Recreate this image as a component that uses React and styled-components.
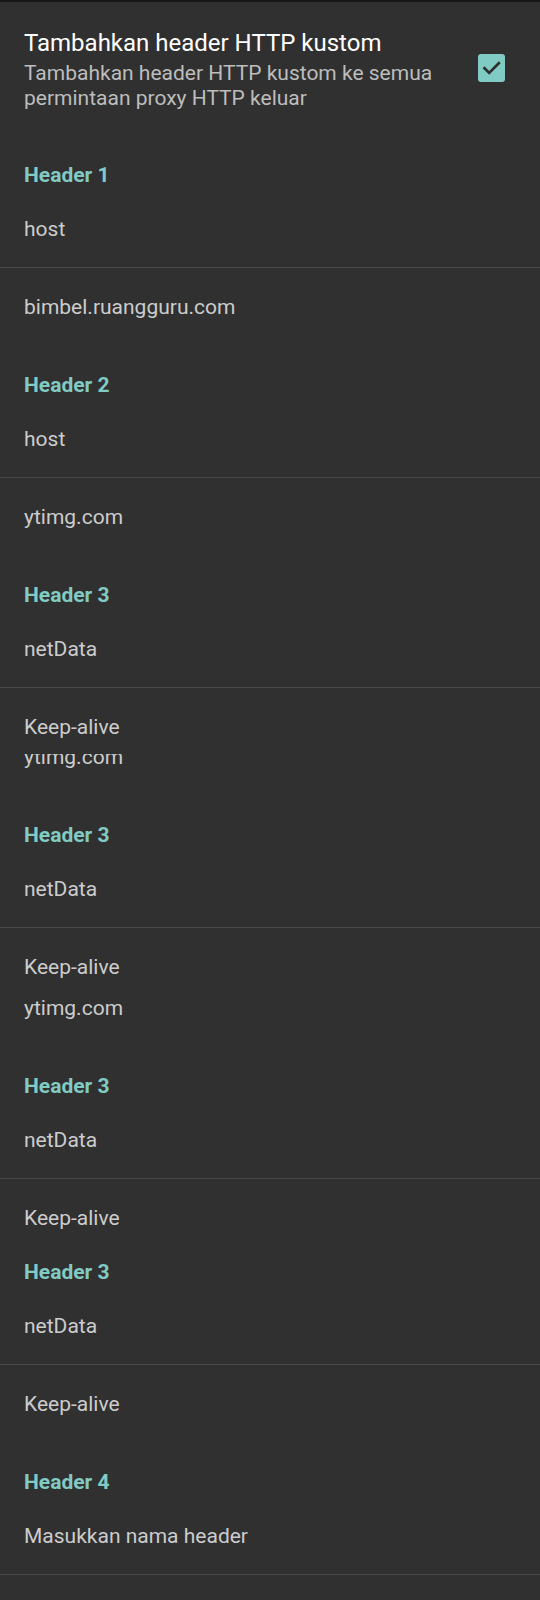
import React from 'react';
import styled, { createGlobalStyle } from 'styled-components';

const GlobalStyle = createGlobalStyle`
  html, body {
    margin: 0;
    padding: 0;
    background: #303030;
  }
  * {
    box-sizing: border-box;
  }
`;

const Screen = styled.div`
  width: 540px;
  min-height: 1600px;
  background: #303030;
  font-family: Roboto, 'Noto Sans', 'Liberation Sans', sans-serif;
  overflow: hidden;
`;

const TopBar = styled.div`
  height: 2px;
  background: #161616;
`;

// ---- switch preference at the top ----
const PrefRow = styled.div`
  height: 146px;
  display: flex;
  flex-direction: row;
  align-items: flex-start;
  justify-content: space-between;
  padding: 25px 35px 0 24px;
`;

const PrefText = styled.div`
  display: flex;
  flex-direction: column;
`;

const PrefTitle = styled.div`
  color: #ffffff;
  font-size: 24px;
  line-height: 32px;
  white-space: nowrap;
`;

const PrefSummary = styled.div`
  color: #bdbdbd;
  font-size: 21px;
  line-height: 25px;
  margin-top: 2px;
  width: 420px;
`;

const CheckBox = styled.div`
  width: 27px;
  height: 28px;
  margin-top: 27px;
  border-radius: 3px;
  background: #80cbc4;
  flex-shrink: 0;
  svg {
    display: block;
  }
`;

// ---- header list ----
const Label = styled.div`
  height: 54px;
  display: flex;
  align-items: center;
  padding: 0 24px;
  color: #80cbc4;
  font-size: 21px;
  font-weight: 700;
`;

const KeyRow = styled.div`
  height: 66px;
  line-height: 54px;
  padding: 0 24px;
  color: #cccccc;
  font-size: 21px;
  border-bottom: 1px solid #4a4a4a;
`;

const ValueRow = styled.div`
  height: ${p => p.$h || 90}px;
  flex-shrink: 0;
  line-height: 78px;
  padding: 0 24px;
  color: #cccccc;
  font-size: 21px;
  overflow: hidden;
`;

/* the screenshot was stitched from several scrolls - a slice shows only the
   lower part of a row */
const Slice = styled.div`
  height: ${p => p.$h}px;
  overflow: hidden;
  display: flex;
  flex-direction: column;
  justify-content: flex-end;
`;

const Check = () => (
  <svg width="27" height="28" viewBox="0 0 27 28">
    <path d="M6.5 14.2 L11.2 18.9 L20.8 9.2" fill="none" stroke="#2e2e2e" strokeWidth="2.7" strokeLinecap="square" />
  </svg>
);

const App = () => {
  return (
    <Screen>
      <GlobalStyle />
      <TopBar />
      <PrefRow>
        <PrefText>
          <PrefTitle>Tambahkan header HTTP kustom</PrefTitle>
          <PrefSummary>Tambahkan header HTTP kustom ke semua permintaan proxy HTTP keluar</PrefSummary>
        </PrefText>
        <CheckBox>
          <Check />
        </CheckBox>
      </PrefRow>

      <Label>Header 1</Label>
      <KeyRow>host</KeyRow>
      <ValueRow>bimbel.ruangguru.com</ValueRow>

      <Label>Header 2</Label>
      <KeyRow>host</KeyRow>
      <ValueRow>ytimg.com</ValueRow>

      <Label>Header 3</Label>
      <KeyRow>netData</KeyRow>
      <ValueRow $h={66}>Keep-alive</ValueRow>
      <Slice $h={54}>
        <ValueRow>ytimg.com</ValueRow>
      </Slice>

      <Label>Header 3</Label>
      <KeyRow>netData</KeyRow>
      <ValueRow $h={60}>Keep-alive</ValueRow>
      <Slice $h={71}>
        <ValueRow>ytimg.com</ValueRow>
      </Slice>

      <Label>Header 3</Label>
      <KeyRow>netData</KeyRow>
      <ValueRow $h={66}>Keep-alive</ValueRow>

      <Label>Header 3</Label>
      <KeyRow>netData</KeyRow>
      <ValueRow>Keep-alive</ValueRow>

      <Label>Header 4</Label>
      <KeyRow>Masukkan nama header</KeyRow>
    </Screen>
  );
};

export default App;
